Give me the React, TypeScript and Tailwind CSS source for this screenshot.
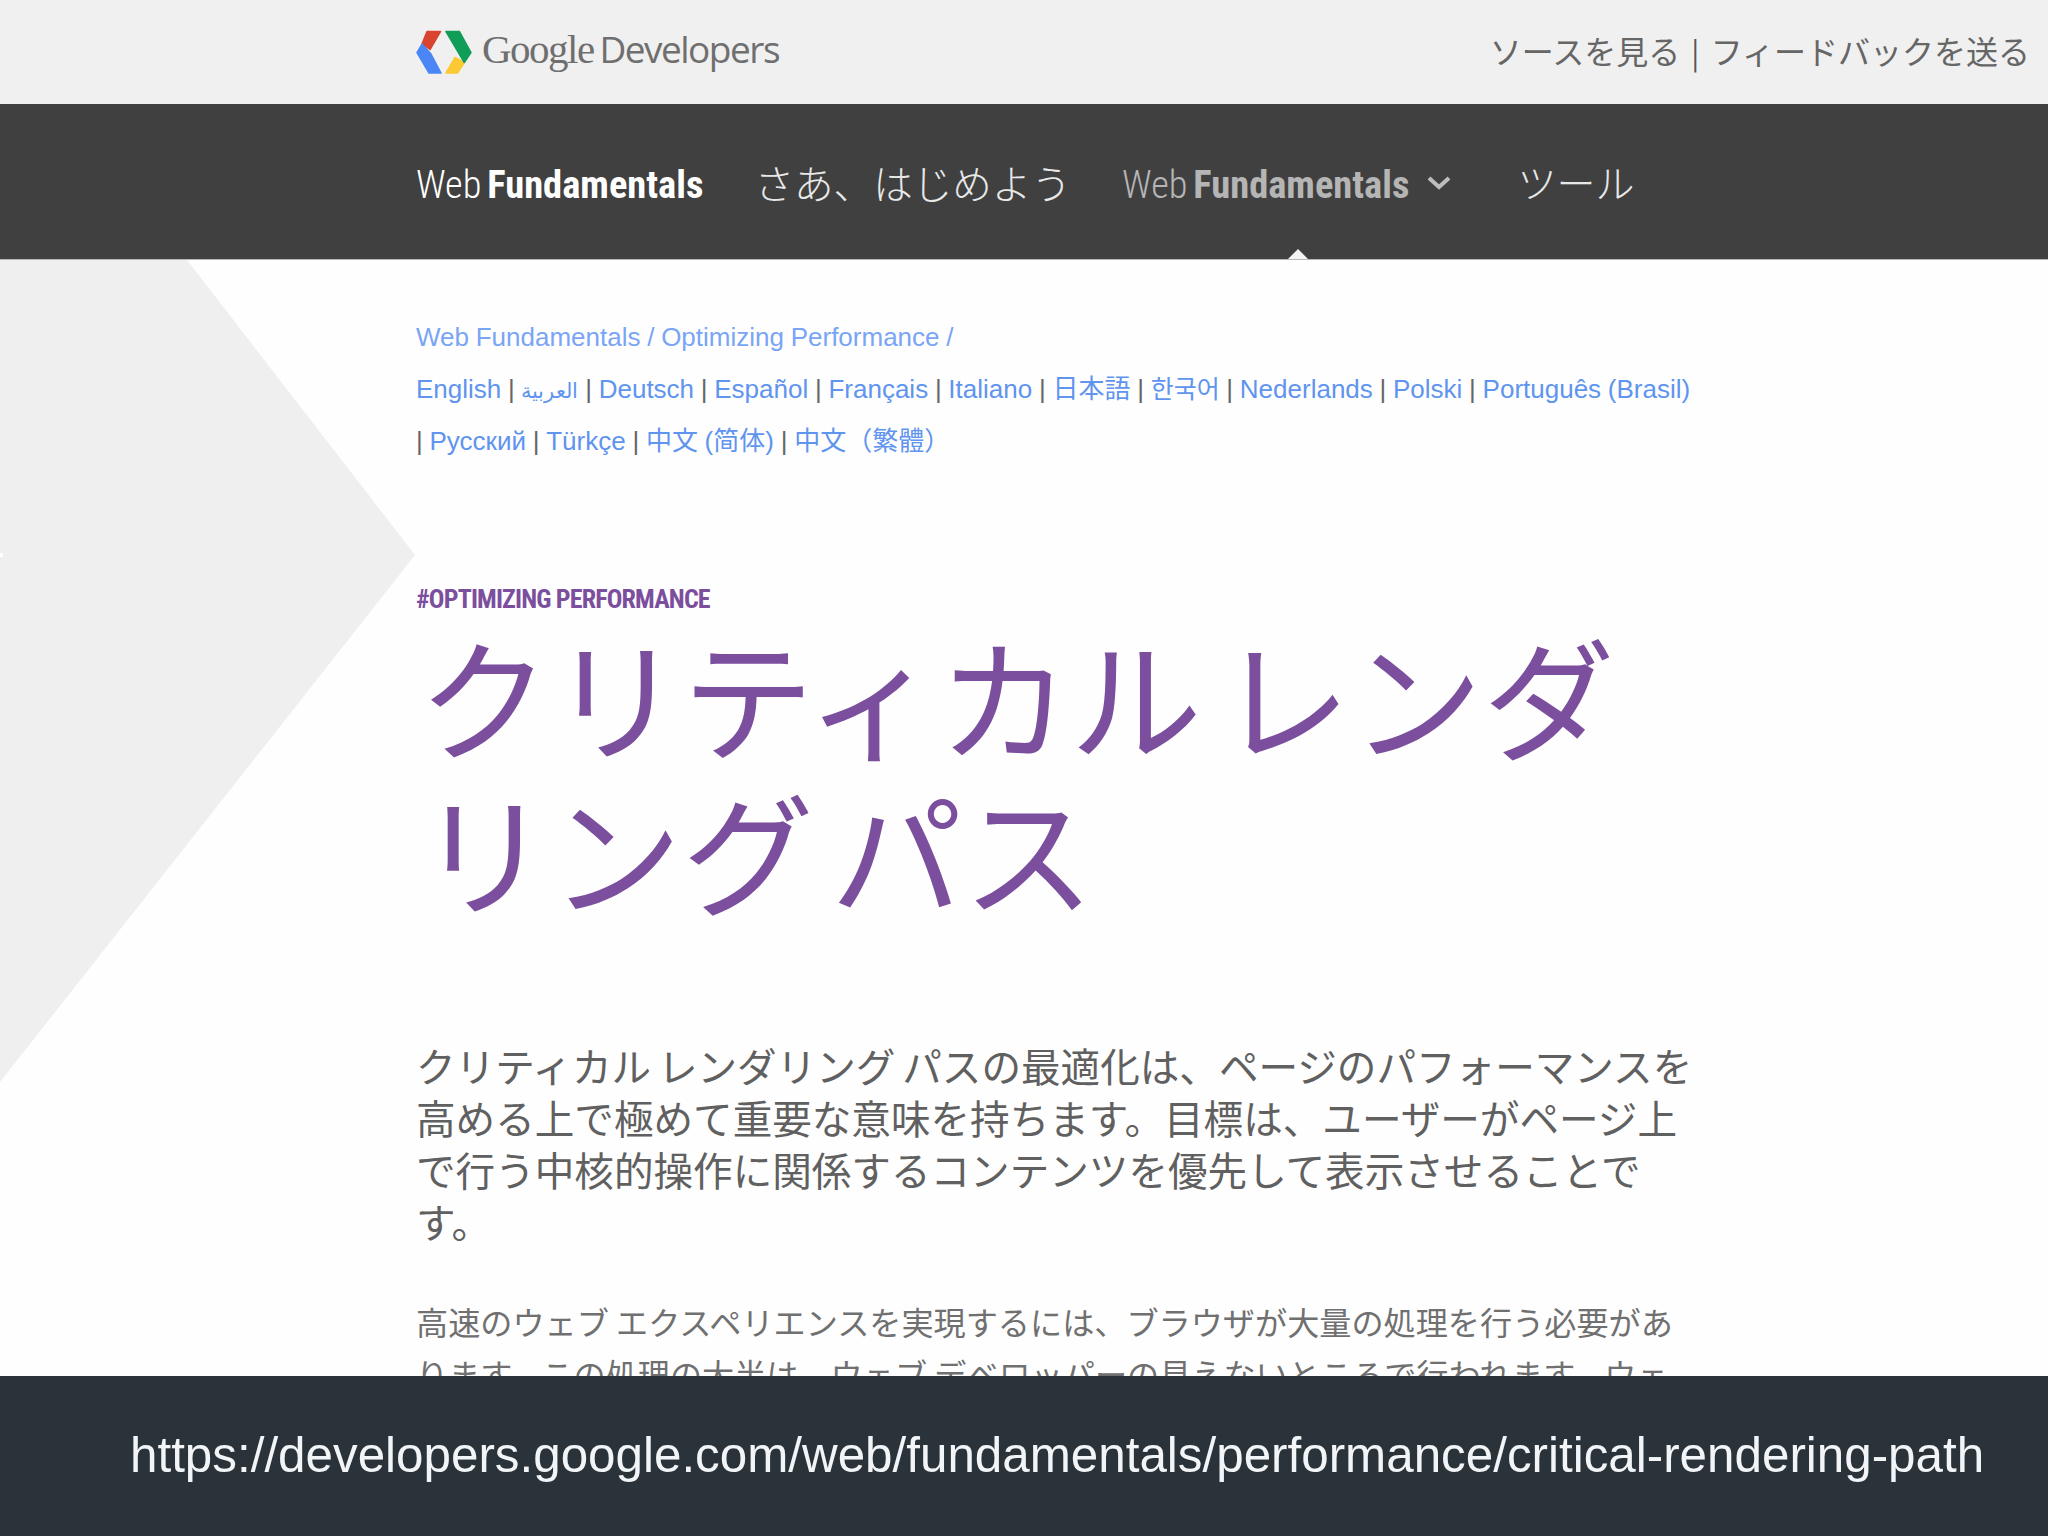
const sans = "font-['Liberation_Sans','Noto_Sans_CJK_JP',sans-serif]";
const jp = "font-['Noto_Sans_CJK_JP',sans-serif]";
const condensed = "font-['Roboto',sans-serif] [font-stretch:75%]";

const line2 = ['English', 'العربية', 'Deutsch', 'Español', 'Français', 'Italiano', '日本語', '한국어', 'Nederlands', 'Polski', 'Português (Brasil)'];
const line3 = ['Русский', 'Türkçe', '中文 (简体)', '中文（繁體）'];

function Logo() {
  return (
    <svg width="56" height="45" viewBox="0 0 56 45" className="shrink-0" strokeLinejoin="round" strokeWidth="1.5">
      <polygon points="11,1.5 24.5,1.5 14,19.5 6,14" fill="#d9432f" stroke="#d9432f" />
      <polygon points="1,22.7 6,14 15,24 25,43 13,43" fill="#4a86f5" stroke="#4a86f5" />
      <polygon points="39,27.5 48.3,32.5 41.5,43 30,43" fill="#fbc933" stroke="#fbc933" />
      <polygon points="30,1.5 43.5,1.5 55,22.7 48.3,32.5" fill="#0f9d58" stroke="#0f9d58" />
    </svg>
  );
}

function Brand({ dim, className = '' }: { dim?: boolean; className?: string }) {
  return (
    <span className={`${condensed} mt-[6px] text-[38.5px] [word-spacing:-3px] whitespace-nowrap ${dim ? 'text-[#b5b5b5]' : 'text-white'} ${className}`}>
      <span className="font-light">Web</span> <span className="font-bold">Fundamentals</span>
    </span>
  );
}

export default function App() {
  return (
    <div className="flex flex-col h-[1536px] w-[2048px] overflow-hidden bg-[#fefefe]">
      <header className="flex items-center justify-between h-[104px] shrink-0 pl-[416px] pr-[18px] bg-[#f0f0f0]">
        <div className="flex items-center gap-[10px]">
          <Logo />
          <span className="mb-[4px] text-[#6f6f6f] tracking-[-1.5px] whitespace-nowrap [word-spacing:3px]">
            <span className="font-['Liberation_Serif',serif] text-[41px]">Google</span>{' '}
            <span className="font-['Open_Sans',sans-serif] text-[37px]">Developers</span>
          </span>
        </div>
        <div className={`${jp} mb-[4px] text-[32px] text-[#666] whitespace-nowrap [word-spacing:4px]`}>
          ソースを見る <span className="text-[30px] text-[#555]">|</span> フィードバックを送る
        </div>
      </header>

      <nav className={`relative flex items-center h-[156px] shrink-0 pl-[416px] bg-[#404040] border-b border-[#b8b8b8] ${jp}`}>
        <Brand />
        <span className="ml-[51px] text-[39.6px] font-light text-[#e8e8e8] whitespace-nowrap">さあ、はじめよう</span>
        <Brand dim className="ml-[51px]" />
        <svg width="24" height="14" viewBox="0 0 24 14" className="ml-[18px] mt-[2px]">
          <path d="M2 2 L12 11 L22 2" fill="none" stroke="#bdbdbd" strokeWidth="4" />
        </svg>
        <span className="ml-[66px] text-[39px] font-light text-[#e8e8e8] whitespace-nowrap">ツール</span>
        <span className="absolute left-[1288px] bottom-0 w-0 h-0 border-x-[10px] border-x-transparent border-b-[10px] border-b-[#f4f4f4]" />
      </nav>

      <main className="relative flex-1 min-h-0 overflow-hidden pl-[416px] pt-[51px]">
        <svg width="416" height="830" viewBox="0 0 416 830" className="absolute left-0 top-0">
          <polygon points="0,0 187,0 415,295 0,822" fill="#efefef" />
          <rect x="0" y="293" width="3" height="4" fill="#ffffff" />
        </svg>
        <div className="relative">
          <div className={`${sans} text-[26px] leading-[52px] text-[#666] whitespace-nowrap [word-spacing:-0.5px]`}>
            <div className="h-[52px] text-[#7aa5f5]">Web Fundamentals / Optimizing Performance /</div>
            <div className="h-[52px]">
              {line2.map((t, i) => (
                <span key={t}>
                  {i > 0 && ' | '}
                  <a className={`text-[#5f94ef] ${t === 'العربية' ? 'text-[21px]' : t === '한국어' ? 'text-[25px]' : ''}`}>{t}</a>
                </span>
              ))}
            </div>
            <div className="h-[52px]">
              {line3.map((t) => (
                <span key={t}>
                  {'| '}
                  <a className="text-[#5f94ef]">{t}</a>{' '}
                </span>
              ))}
            </div>
          </div>

          <div className={`${condensed} mt-[106px] text-[26px] leading-[52px] font-bold tracking-[-0.85px] text-[#7b4f9d] whitespace-nowrap`}>#OPTIMIZING PERFORMANCE</div>
          <h1 className={`${jp} -mt-[9px] pl-[2px] text-[132px] leading-[155px] font-normal text-[#7b4f9d] whitespace-nowrap [word-spacing:-13px]`}>
            クリティカル レンダ<br />リング パス
          </h1>

          <p className={`${jp} mt-[113px] text-[39.6px] leading-[52px] font-normal text-[#606060] whitespace-nowrap [word-spacing:-2px]`}>
            クリティカル レンダリング パスの最適化は、ページのパフォーマンスを<br />
            高める上で極めて重要な意味を持ちます。目標は、ユーザーがページ上<br />
            で行う中核的操作に関係するコンテンツを優先して表示させることで<br />
            す。
          </p>
          <p className={`${jp} mt-[48px] text-[32.15px] leading-[52px] text-[#707070] whitespace-nowrap`}>
            高速のウェブ エクスペリエンスを実現するには、ブラウザが大量の処理を行う必要があ<br />
            ります。この処理の大半は、ウェブ デベロッパーの見えないところで行われます。ウェ
          </p>
        </div>
      </main>

      <footer className="flex items-center h-[160px] shrink-0 pl-[130px] bg-[#2a3339]">
        <span className={`${sans} -mt-[2px] text-[49.35px] text-[#f2f5f7] whitespace-nowrap`}>https://developers.google.com/web/fundamentals/performance/critical-rendering-path</span>
      </footer>
    </div>
  );
}
